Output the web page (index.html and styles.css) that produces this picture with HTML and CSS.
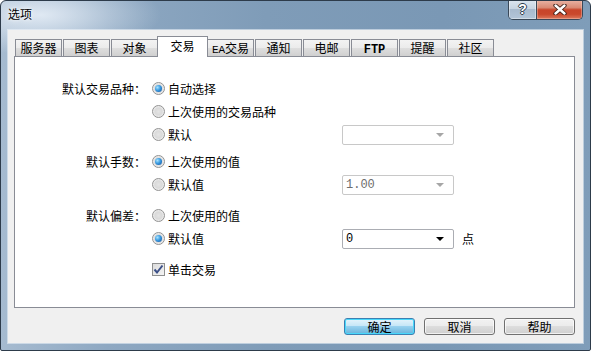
FILE: index.html
```html
<!DOCTYPE html>
<html lang="zh-CN">
<head>
<meta charset="utf-8">
<title>选项</title>
<link rel="stylesheet" href="styles.css">
</head>
<body>
<div class="window">
  <div class="titlebar">
    <span class="title">选项</span>
    <div class="caption-btns">
      <div class="cap-help">?</div>
      <div class="cap-close">
        <svg width="14" height="11" viewBox="0 0 14 11">
          <path d="M2.5 1.5 L11.5 9.5 M11.5 1.5 L2.5 9.5" stroke="#3b1a12" stroke-width="4.2" stroke-linecap="round"/>
          <path d="M2.5 1.5 L11.5 9.5 M11.5 1.5 L2.5 9.5" stroke="#ffffff" stroke-width="2.4" stroke-linecap="round"/>
        </svg>
      </div>
    </div>
  </div>
  <div class="client">
    <div class="tabs">
      <div class="tab">服务器</div>
      <div class="tab">图表</div>
      <div class="tab">对象</div>
      <div class="tab active">交易</div>
      <div class="tab"><span class="lat">EA</span>交易</div>
      <div class="tab">通知</div>
      <div class="tab">电邮</div>
      <div class="tab"><span class="lat bold">FTP</span></div>
      <div class="tab">提醒</div>
      <div class="tab">社区</div>
    </div>
    <div class="panel">
      <div class="group">
        <div class="row">
          <span class="label">默认交易品种：</span>
          <span class="opt"><i class="radio on"></i>自动选择</span>
        </div>
        <div class="row">
          <span class="label"></span>
          <span class="opt"><i class="radio"></i>上次使用的交易品种</span>
        </div>
        <div class="row">
          <span class="label"></span>
          <span class="opt"><i class="radio"></i>默认</span>
          <div class="combo disabled"><span class="val"></span><i class="arrow"></i></div>
        </div>
      </div>
      <div class="group g2">
        <div class="row">
          <span class="label">默认手数：</span>
          <span class="opt"><i class="radio on"></i>上次使用的值</span>
        </div>
        <div class="row">
          <span class="label"></span>
          <span class="opt"><i class="radio"></i>默认值</span>
          <div class="combo disabled"><span class="val">1.00</span><i class="arrow"></i></div>
        </div>
      </div>
      <div class="group g3">
        <div class="row">
          <span class="label">默认偏差：</span>
          <span class="opt"><i class="radio"></i>上次使用的值</span>
        </div>
        <div class="row">
          <span class="label"></span>
          <span class="opt"><i class="radio on"></i>默认值</span>
          <div class="combo"><span class="val">0</span><i class="arrow"></i></div>
          <span class="unit">点</span>
        </div>
      </div>
      <div class="group g4">
        <div class="row">
          <span class="label"></span>
          <span class="opt"><i class="check">
            <svg width="11" height="11" viewBox="0 0 11 11"><path d="M1.5 5.5 L4 8.5 L9.5 1.5" fill="none" stroke="#3c5088" stroke-width="2"/></svg>
          </i>单击交易</span>
        </div>
      </div>
    </div>
    <div class="buttons">
      <div class="btn default">确定</div>
      <div class="btn">取消</div>
      <div class="btn">帮助</div>
    </div>
  </div>
</div>
</body>
</html>
```
FILE: styles.css
```css
html, body {
  margin: 0;
  padding: 0;
  background: #ffffff;
}
body {
  font-family: "Noto Sans CJK SC", "Liberation Sans", sans-serif;
  font-size: 12px;
  color: #000;
}
.window {
  width: 591px;
  height: 351px;
  box-sizing: border-box;
  border: 1px solid #2d3b4a;
  border-radius: 6px 6px 2px 2px;
  background:
    radial-gradient(ellipse 120px 40px at 40px 14px, rgba(235,242,250,0.85), rgba(235,242,250,0) 100%),
    linear-gradient(90deg, #a6bbd0 0%, #8ea8c2 18%, #7f9cb8 45%, #7a98b5 75%, #7f9db9 100%);
  display: flex;
  flex-direction: column;
  overflow: hidden;
}
.titlebar {
  height: 29px;
  display: flex;
  align-items: flex-start;
  padding-left: 7px;
  flex: none;
}
.title {
  margin-top: 6px;
  line-height: 13px;
  font-size: 12px;
  text-shadow: 0 0 6px rgba(255,255,255,0.9), 0 0 3px rgba(255,255,255,0.9);
}
.caption-btns {
  margin-left: auto;
  margin-right: 7px;
  margin-top: -1px;
  width: 75px;
  height: 20px;
  box-sizing: border-box;
  border: 1px solid #3a4858;
  border-top: none;
  border-radius: 0 0 5px 5px;
  display: flex;
  overflow: hidden;
}
.cap-help {
  width: 27px;
  height: 100%;
  background: linear-gradient(#dce5ef 0%, #c7d4e2 45%, #a8bace 50%, #b3c5d8 100%);
  color: #fff;
  font-family: "Liberation Sans", sans-serif;
  font-weight: bold;
  font-size: 14px;
  line-height: 19px;
  text-align: center;
  text-shadow: 1px 0 0 #2f3d4d, -1px 0 0 #2f3d4d, 0 1px 0 #2f3d4d, 0 -1px 0 #2f3d4d;
  box-shadow: inset 0 0 0 1px rgba(255,255,255,0.4);
}
.cap-close {
  flex: 1;
  border-left: 1px solid #3a4858;
  background: linear-gradient(#eab4a6 0%, #d98a74 40%, #c8452a 52%, #c9482c 75%, #dc7a5e 100%);
  display: flex;
  align-items: center;
  justify-content: center;
  box-shadow: inset 0 0 0 1px rgba(255,220,210,0.35);
}
.client {
  flex: 1;
  margin: 0 7px 7px 7px;
  background: #f0f0f0;
  display: flex;
  flex-direction: column;
  box-shadow: 0 0 0 1px rgba(240,246,252,0.55);
}
.tabs {
  margin-top: 6px;
  height: 20px;
  padding-left: 7px;
  display: flex;
  align-items: flex-end;
  position: relative;
  z-index: 2;
}
.tab {
  width: 47px;
  height: 17px;
  margin-right: 1px;
  box-sizing: border-box;
  border: 1px solid #898c95;
  border-bottom: none;
  background: linear-gradient(#f3f3f3 0%, #ebebeb 50%, #dedede 50%, #d0d0d0 100%);
  text-align: center;
  line-height: 16px;
  font-size: 12px;
  white-space: nowrap;
}
.tab.active {
  width: 51px;
  height: 21px;
  margin-left: -2px;
  margin-right: -1px;
  margin-bottom: -1px;
  background: #ffffff;
  line-height: 18px;
}
.lat {
  font-family: "Liberation Mono", monospace;
  font-size: 11px;
}
.lat.bold {
  font-weight: bold;
  font-size: 12px;
}
.panel {
  margin: 0 8px 0 6px;
  height: 252px;
  box-sizing: border-box;
  border: 1px solid #898c95;
  background: #ffffff;
  padding-top: 20px;
  position: relative;
  z-index: 1;
}
.g2 { margin-top: 4px; }
.g3 { margin-top: 8px; }
.g4 { margin-top: 8px; }
.row {
  height: 23px;
  display: grid;
  grid-template-columns: 131px 196px 112px auto;
  align-items: center;
  line-height: 14px;
}
.label {
  text-align: right;
  white-space: nowrap;
}
.opt {
  display: flex;
  align-items: center;
  padding-left: 6px;
  white-space: nowrap;
}
.radio {
  width: 13px;
  height: 13px;
  box-sizing: border-box;
  border-radius: 50%;
  border: 1px solid #929292;
  background: radial-gradient(circle at 50% 50%, #e4e4e4 0%, #dadada 45%, #f4f4f4 80%, #ffffff 100%);
  margin-right: 3px;
  position: relative;
  flex: none;
}
.radio.on::after {
  content: "";
  position: absolute;
  left: 2px;
  top: 2px;
  width: 7px;
  height: 7px;
  border-radius: 50%;
  background: radial-gradient(circle at 35% 35%, #a8e4ff 0%, #3a9ae0 45%, #0f4f9c 100%);
}
.check {
  width: 13px;
  height: 13px;
  box-sizing: border-box;
  border: 1px solid #8e8f8f;
  background: linear-gradient(135deg, #dcdcdc 0%, #f4f4f4 100%);
  margin-right: 3px;
  display: flex;
  align-items: center;
  justify-content: center;
  flex: none;
}
.check svg { display: block; }
.combo {
  width: 112px;
  height: 20px;
  box-sizing: border-box;
  border: 1px solid #abadb3;
  border-radius: 2px;
  background: #fff;
  display: flex;
  align-items: center;
  padding-left: 3px;
  padding-right: 9px;
}
.combo.disabled {
  border-color: #c8c8c8;
}
.val {
  flex: 1;
  font-family: "Liberation Mono", monospace;
  font-size: 12px;
  line-height: 14px;
}
.combo.disabled .val { color: #6d6d6d; }
.arrow {
  width: 0;
  height: 0;
  border-left: 4px solid transparent;
  border-right: 4px solid transparent;
  border-top: 4px solid #000;
}
.combo.disabled .arrow {
  border-top-color: #a6a6a6;
}
.unit {
  padding-left: 8px;
}
.buttons {
  margin-top: 10px;
  padding-right: 8px;
  display: flex;
  justify-content: flex-end;
  gap: 9px;
}
.btn {
  width: 71px;
  height: 17px;
  box-sizing: border-box;
  border: 1px solid #707070;
  border-radius: 3px;
  background: linear-gradient(#f2f2f2 0%, #ebebeb 50%, #dddddd 50%, #cfcfcf 100%);
  box-shadow: inset 0 0 0 1px rgba(255,255,255,0.7);
  text-align: center;
  line-height: 15px;
}
.btn.default {
  border-color: #3c7fb1;
  background: linear-gradient(#e5f4fc 0%, #c4e5f6 50%, #98d1ef 50%, #68b3db 100%);
  box-shadow: inset 0 0 0 1px #48d8fb;
}
```
